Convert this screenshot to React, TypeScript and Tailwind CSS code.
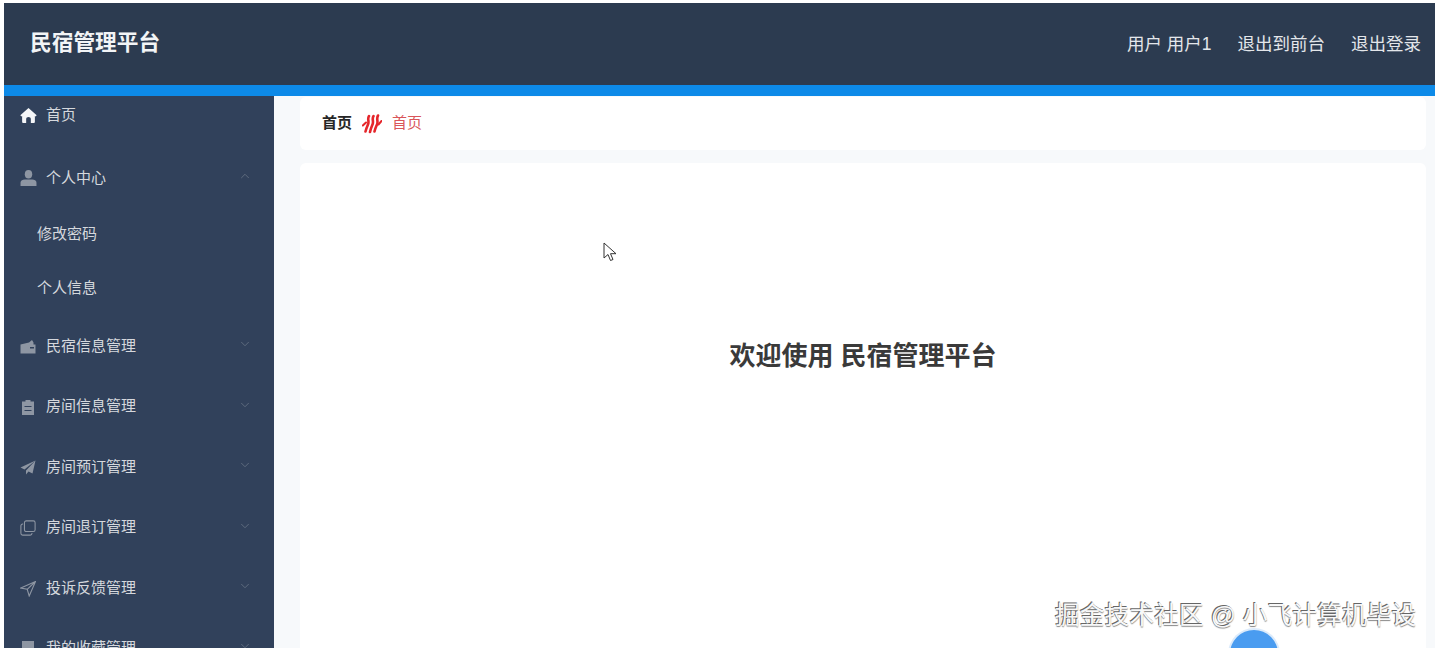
import { ChevronDown, ChevronUp } from "lucide-react";

const F = "font-['Liberation_Sans','Noto_Sans_CJK_SC',sans-serif]";

const Home = () => (
  <svg viewBox="0 0 16 16" className="w-[17px] h-[17px]" fill="#f4f5f7"><path d="M8 1 0.300 7.800l1 1.200L2 8.500V14q0 1 1 1h2.800v-4q0-1.500 2.200-1.500t2.200 1.500v4H13q1 0 1-1V8.500l.7.500 1-1.200z" /></svg>
);
const User = () => (
  <svg viewBox="0 0 16 16" className="w-[17px] h-[18px]" fill="#8e96a3"><ellipse cx="8" cy="4.500" rx="3.500" ry="4" /><path d="M.5 15.500v-3c0-2 2-3 4-3h7c2 0 4 1 4 3v3z" /></svg>
);
const Wallet = () => (
  <svg viewBox="0 0 16 16" className="w-[17px] h-[17px]" fill="#8e96a3"><path d="M0.500 6 9 4l3-2.500 1.500 2.500v2h2v9H.5z" /><rect x="10" y="8.500" width="4" height="1.500" fill="#31415b" /></svg>
);
const Clip = () => (
  <svg viewBox="0 0 16 16" className="w-[16px] h-[18px]" fill="#8e96a3"><path d="M2 2.500h3.500V1h5v1.500H14V16H2z" /><path d="M4.500 7h7v1h-7zM4.500 11h7v1h-7z" fill="#31415b" /></svg>
);
const Plane = () => (
  <svg viewBox="0 0 16 16" className="w-[17px] h-[17px]" fill="#8e96a3"><path d="M15.500 1 .5 8l4 2zM15.500 1 6 11v4l2.500-3 4 2z" /></svg>
);
const Copy = () => (
  <svg viewBox="0 0 18 18" className="w-[18px] h-[18px]" fill="none" stroke="#8e96a3" strokeWidth="1.200"><rect x="5" y="1" width="12" height="12" rx="2" /><path d="M3.500 4.500H3a2 2 0 0 0-2 2V15a2 2 0 0 0 2 2h8.500a2 2 0 0 0 2-2v-.5" /></svg>
);
const Send = () => (
  <svg viewBox="0 0 16 16" className="w-[17px] h-[17px]" fill="none" stroke="#8e96a3" strokeWidth="1.100"><path d="M15.500 1 .8 7.500l6.400 1.300 2 6.700zM15.500 1 7.200 8.800" /></svg>
);
const Square = () => (
  <svg viewBox="0 0 16 16" className="w-[16px] h-[16px]" fill="#8e96a3"><rect x="2" y="1" width="12" height="14" /></svg>
);

const items = [
  { label: "民宿信息管理", icon: <Wallet />, h: "h-[60px]" },
  { label: "房间信息管理", icon: <Clip />, h: "h-[61px]" },
  { label: "房间预订管理", icon: <Plane />, h: "h-[60px]" },
  { label: "房间退订管理", icon: <Copy />, h: "h-[61px]" },
  { label: "投诉反馈管理", icon: <Send />, h: "h-[60px]" },
  { label: "我的收藏管理", icon: <Square />, h: "h-[60px]" },
];

export default function App() {
  return (
    <div className={`${F} relative h-[648px] w-[1435px] overflow-hidden bg-white pt-[3px] pl-[4px]`}>
      <header className="flex h-[82px] items-center justify-between bg-[#2c3b50] pl-[26px] pr-[14px]">
        <div className="mb-[2px] text-[21.700px] font-bold text-[#f2f4f6]">民宿管理平台</div>
        <div className="flex gap-[26px] text-[17.500px] text-[#e3e6ea]">
          <span>用户 用户1</span>
          <span>退出到前台</span>
          <span>退出登录</span>
        </div>
      </header>
      <div className="h-[11px] bg-[#0d8ae8]" />
      <div className="flex h-[552px]">
        <aside className="w-[270px] shrink-0 overflow-hidden bg-[#31415b] text-[15px] text-[#d5d8dd]">
          <div className="flex h-[39px] items-center gap-[10px] pl-[16px]">
            <Home />
            <span className="-ml-px">首页</span>
          </div>
          <div className="flex h-[63px] items-center justify-between pl-[16px] pr-[22px] pt-[23px]">
            <div className="flex items-center gap-[10px]">
              <User />
              <span className="-ml-px">个人中心</span>
            </div>
            <ChevronUp className="mb-[4px] h-[14px] w-[14px] text-[#6b7788]" strokeWidth={1.300} />
          </div>
          <div className="flex h-[70px] items-center pl-[33px] pt-[2px]">修改密码</div>
          <div className="flex h-[48px] items-center pl-[33px] pb-[8px]">个人信息</div>
          {items.map((it) => (
            <div key={it.label} className={`${it.h} flex items-center justify-between pl-[16px] pr-[22px]`}>
              <div className="flex items-center gap-[10px]">
                <span className="flex w-[16px] justify-center">{it.icon}</span>
                <span>{it.label}</span>
              </div>
              <ChevronDown className="mb-[4px] h-[14px] w-[14px] text-[#6b7788]" strokeWidth={1.300} />
            </div>
          ))}
        </aside>
        <main className="flex min-w-0 flex-1 flex-col gap-[13px] bg-[#f7f9fb] pl-[26px] pr-[9px] pt-[1px]">
          <div className="flex h-[53px] items-center rounded-[6px] bg-white pl-[22px] text-[15px]">
            <span className="font-bold text-[#262626]">首页</span>
            <svg viewBox="0 0 20 20" className="mx-[10px] h-[20px] w-[20px]" fill="none" stroke="#e5262b" strokeWidth="2.600" strokeLinecap="round">
              <path d="M7 2C5 5 7.500 7 6 10.500S4 15.500 3.500 17.500M11.500 2C9.500 5 12 7 10.500 10.500S8.500 15.500 8 18M16 1.500C14 5 16.500 7 15 10.500S13 15 12.500 17.500" />
              <path d="M.8 11.500 4 8.500M16.500 10.500 19.500 7" strokeWidth="2" />
            </svg>
            <span className="text-[#d9565a]">首页</span>
          </div>
          <div className="flex flex-1 justify-center rounded-t-[6px] bg-white pt-[176px]">
            <h1 className="h-fit text-[26px] leading-[34px] font-bold text-[#3a3a3a]">欢迎使用 民宿管理平台</h1>
          </div>
        </main>
      </div>
      <svg viewBox="0 0 14 22" className="absolute left-[603px] top-[242px] h-[22px] w-[14px]" fill="#fff" stroke="#333" strokeWidth="1">
        <path d="M1 1v15l4-3.500 2.500 6 2.500-1-2.500-5.800H13z" />
      </svg>
      <div className="absolute left-[1055px] top-[600px] text-[24.800px] leading-[31px] text-[#f8f8f8] [text-shadow:-1px_-1px_0_#666,0_1px_1px_#888]">
        掘金技术社区 @ 小飞计算机毕设
      </div>
      <div className="absolute left-[1230px] top-[630px] h-[48px] w-[48px] rounded-full bg-[#4a9cf0] ring-2 ring-[#dcebfb]" />
    </div>
  );
}
